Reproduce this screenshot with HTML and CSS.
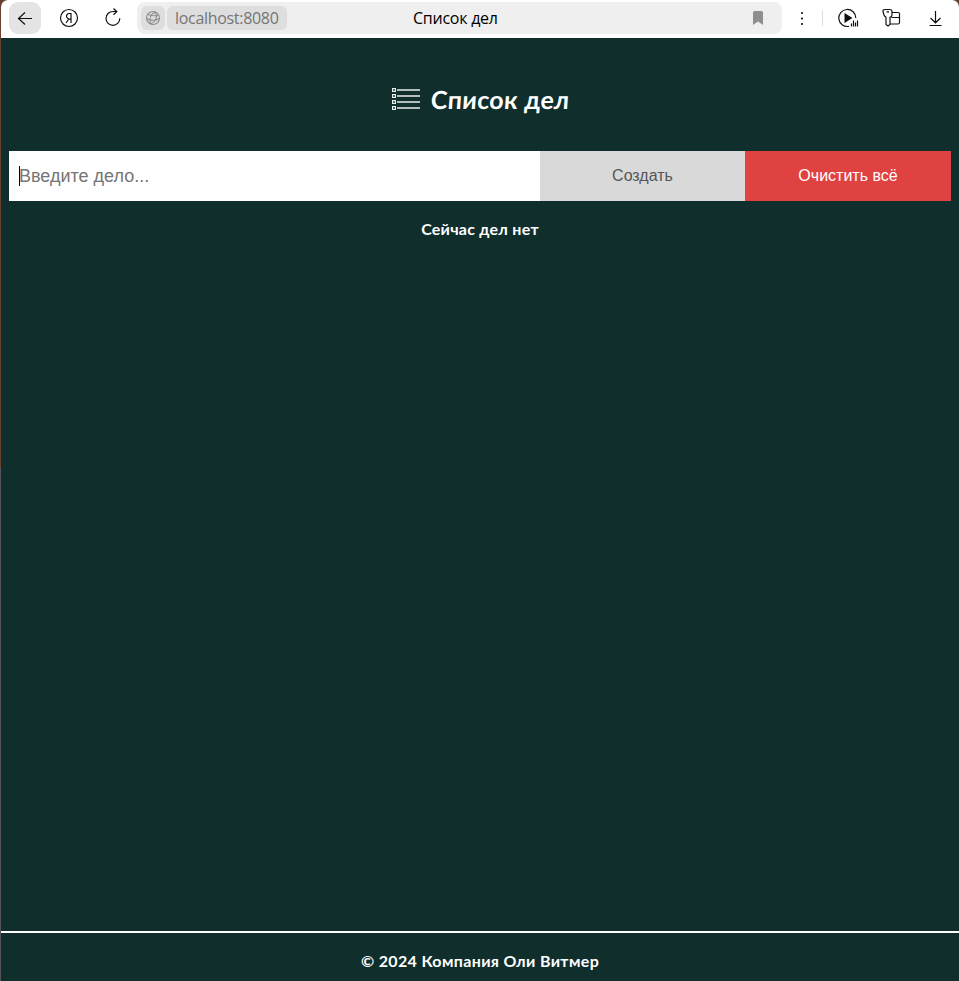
FILE: index.html
```html
<!DOCTYPE html>
<html lang="ru">
<head>
<meta charset="utf-8">
<title>Список дел</title>
<link rel="stylesheet" href="styles.css">
</head>
<body>
<div class="window">
  <header class="toolbar">
    <button class="tool back" aria-label="Назад"><svg width="32" height="32" viewBox="0 0 32 32"><path d="M16 10.500l-6.500 6 6.500 6M10 16.500h13"/></svg></button>
    <button class="tool" aria-label="Главная"><svg width="32" height="32" viewBox="0 0 32 32"><circle cx="16" cy="16" r="8.500"/><path d="M18 21v-9.500h-1.500c-2 0-3 1.100-3 2.800 0 1.500.8 2.300 2.300 2.800H18M15.800 17L13 21"/></svg></button>
    <button class="tool" aria-label="Обновить"><svg width="32" height="32" viewBox="0 0 32 32"><path d="M22.800 16.200A6.900 6.900 0 1 1 16 9.500h3.500M16.500 6.500l3.300 3-3.300 3.200"/></svg></button>
    <div class="address">
      <span class="chip globe"><svg width="24" height="24" viewBox="0 0 24 24"><circle cx="12" cy="12" r="6.500"/><path d="M14.500 6c-5 2-6.500 6.500-5 12M14.500 6c2 5 .5 9.500-5 12M5.500 12.500c4 2.200 9 2.200 13 0M7 8.500c3 1 7 1.500 10.500 1"/></svg></span>
      <span class="chip url">localhost:8080</span>
      <span class="page-title">Список дел</span>
      <svg class="bookmark" width="12" height="14" viewBox="0 0 12 14"><path d="M1 1.500Q1 0 2.500 0h7Q11 0 11 1.500V14L6 10.500 1 14z"/></svg>
    </div>
    <button class="tool more" aria-label="Меню"><svg width="32" height="32" viewBox="0 0 32 32"><g class="solid"><circle cx="16" cy="11" r="1.100"/><circle cx="16" cy="16.500" r="1.100"/><circle cx="16" cy="22" r="1.100"/></g></svg></button>
    <span class="divider"></span>
    <button class="tool play" aria-label="Музыка"><svg width="32" height="32" viewBox="0 0 32 32"><path d="M17 24.300A8.500 8.500 0 1 1 23.800 16"/><path class="solid" d="M12.500 11l8 5-8 5z"/><path d="M19.500 21.500v3M21.500 18.500v6M23.500 20.500v4M25.500 18.500v6"/></svg></button>
    <button class="tool" aria-label="Пароли"><svg width="32" height="32" viewBox="0 0 32 32"><path d="M9 7.500h5q2 0 2 2v3.500q0 1.500-2 2.200v7.300l-2 1.500-2-1.500v-7.300q-1.500-.7-2-2.200l-1-3.500q-.3-2 2-2zM10.500 9.800H13M16 10.500h6q1.500 0 1.500 1.500v8.500q0 1.500-1.500 1.500h-8M15.500 15.500h8"/></svg></button>
    <button class="tool" aria-label="Загрузки"><svg width="32" height="32" viewBox="0 0 32 32"><path d="M15.500 9v11.500M10.500 16l5 4.800 5-4.800M9.500 23.500h12"/></svg></button>
  </header>
  <main class="content">
    <h1 class="heading">
      <svg width="28" height="22" viewBox="0 0 28 22"><path d="M5 2h23M5 8h23M5 14h23M5 20h23"/><g><rect x=".5" y=".5" width="3" height="3"/><rect x=".5" y="6.500" width="3" height="3"/><rect x=".5" y="12.500" width="3" height="3"/><rect x=".5" y="18.500" width="3" height="3"/></g></svg>
      <span class="heading-text">Список дел</span>
    </h1>
    <form class="form">
      <div class="field"><span class="caret"></span><span>Введите дело...</span></div>
      <button class="btn create" type="button">Создать</button>
      <button class="btn clear" type="button">Очистить всё</button>
    </form>
    <p class="empty">Сейчас дел нет</p>
  </main>
  <footer class="footer">© 2024 Компания Оли Витмер</footer>
</div>
</body>
</html>
```
FILE: styles.css
```css
* { box-sizing: border-box; }
body {
  margin: 0;
  height: 981px;
  padding-left: 1px;
  background: linear-gradient(#684131 468px, #555558 468px);
}
button { border: 0; padding: 0; background: none; }
.window {
  height: 981px;
  display: flex;
  flex-direction: column;
  overflow: hidden;
  background: #0f2e2c;
  border-radius: 7px 7px 0 0;
}
.toolbar {
  height: 38px;
  display: flex;
  padding: 2px 7px 4px 8px;
  background: #fff;
}
.tool {
  width: 32px;
  height: 32px;
  margin-right: 12px;
  flex: none;
  border-radius: 9px;
}
.tool:last-child { margin-right: 0; }
.tool svg, .chip svg { display: block; }
.tool path, .tool circle {
  fill: none;
  stroke: #111;
  stroke-width: 1.200;
}
.tool path.solid, .tool .solid circle { fill: #111; stroke: none; }
.back { background: #e4e4e4; }
.address {
  width: 645px;
  height: 32px;
  display: flex;
  align-items: center;
  padding: 0 18px 0 4px;
  border-radius: 8px;
  background: #efefef;
  margin-left: -4px;
  font: 16px/24px "Open Sans", sans-serif;
}
.chip {
  height: 24px;
  border-radius: 6px;
  background: #dedede;
}
.globe { width: 24px; margin-right: 2px; }
.globe path, .globe circle { fill: none; stroke: #8c8c8c; stroke-width: 1.100; }
.url {
  width: 120px;
  padding-left: 8px;
  color: #757575;
  letter-spacing: -.31px;
}
.page-title { margin-left: 126px; color: #000; letter-spacing: -.25px; white-space: nowrap; }
.bookmark { margin-left: auto; fill: #8f8f8f; }
.more { margin: 0 4px; }
.divider { width: 1px; height: 16px; margin: 8px 9px 0 0; background: #ddd; }
.content { flex: 1; padding: 0 8px; }
.heading {
  height: 28px;
  margin: 47px 0 38px;
  display: flex;
  align-items: center;
  justify-content: center;
  gap: 11px;
  color: #fff;
  font: 700 25px/28px Lato, sans-serif;
}
.heading svg { fill: #526665; stroke: #e8eceb; }
.heading svg path { stroke: #b3bdbc; stroke-width: 2; }
.heading-text {
  width: 138px;
  white-space: nowrap;
  letter-spacing: .35px;
  transform: skewX(-4deg);
}
.form { height: 50px; display: flex; font-family: "Liberation Sans", sans-serif; }
.field {
  width: 531px;
  display: flex;
  align-items: center;
  padding-left: 10px;
  background: #fff;
  color: #757575;
  font-size: 18px;
}
.caret { width: 1px; height: 20px; margin-right: -1px; background: #000; }
.btn { font: 16px "Liberation Sans", sans-serif; }
.create { width: 205px; background: #d9d9d9; color: #555; }
.clear { flex: 1; background: #e04141; color: #fff; }
.empty {
  margin: 17px 0 0;
  color: #fff;
  text-align: center;
  font: 700 16px/22px Lato, sans-serif;
  letter-spacing: .25px;
}
.footer {
  height: 50px;
  padding-top: 16px;
  border-top: 2px solid #fff;
  color: #fff;
  text-align: center;
  font: 700 16px/23px Lato, sans-serif;
  letter-spacing: .36px;
}
```
